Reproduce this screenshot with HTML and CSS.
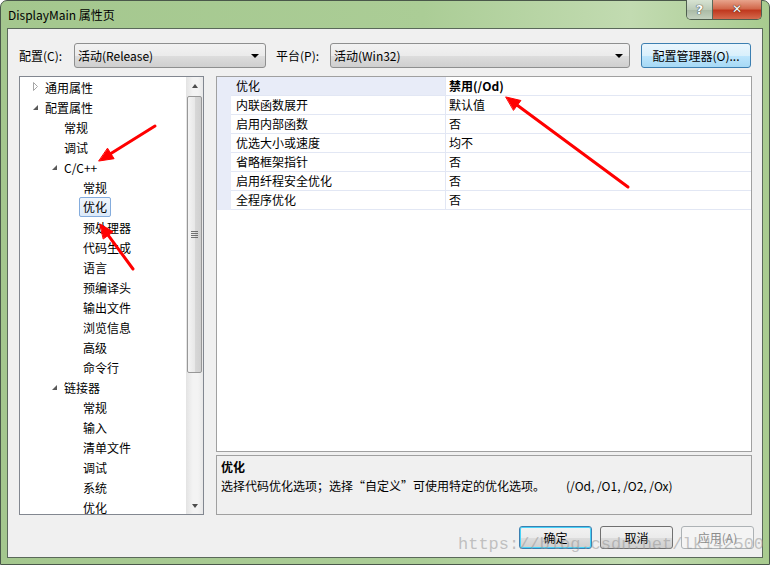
FILE: index.html
```html
<!DOCTYPE html>
<html lang="zh-CN">
<head>
<meta charset="utf-8">
<title>DisplayMain 属性页</title>
<link rel="stylesheet" href="styles.css">
</head>
<body>
<div class="window">
  <div class="titlebar">
    <span class="title">DisplayMain 属性页</span>
    <div class="captions">
      <div class="cap cap-help">?</div>
      <div class="cap cap-close">✕</div>
    </div>
  </div>
  <div class="client">
    <div class="toprow">
      <span class="lbl lbl1">配置(C):</span>
      <div class="combo combo1"><span>活动(Release)</span><i class="dd"></i></div>
      <span class="lbl lbl2">平台(P):</span>
      <div class="combo combo2"><span>活动(Win32)</span><i class="dd"></i></div>
      <div class="btn btn-mgr">配置管理器(O)...</div>
    </div>
    <div class="main">
      <div class="tree">
        <div class="tree-items">
          <div class="ti l0"><svg class="exp" width="13" height="20" viewBox="0 0 13 20"><polygon points="1.5,5.5 5.5,9.5 1.5,13.5" fill="#fff" stroke="#a6a6a6" stroke-width="1"/></svg><span>通用属性</span></div>
          <div class="ti l0"><svg class="exp" width="13" height="20" viewBox="0 0 13 20"><polygon points="1,13 6,8 6,13" fill="#595959"/></svg><span>配置属性</span></div>
          <div class="ti l1"><span class="noexp"></span><span>常规</span></div>
          <div class="ti l1"><span class="noexp"></span><span>调试</span></div>
          <div class="ti l1"><svg class="exp" width="13" height="20" viewBox="0 0 13 20"><polygon points="1,13 6,8 6,13" fill="#595959"/></svg><span>C/C++</span></div>
          <div class="ti l2"><span class="noexp"></span><span>常规</span></div>
          <div class="ti l2"><span class="noexp"></span><span class="sel">优化</span></div>
          <div class="ti l2"><span class="noexp"></span><span>预处理器</span></div>
          <div class="ti l2"><span class="noexp"></span><span>代码生成</span></div>
          <div class="ti l2"><span class="noexp"></span><span>语言</span></div>
          <div class="ti l2"><span class="noexp"></span><span>预编译头</span></div>
          <div class="ti l2"><span class="noexp"></span><span>输出文件</span></div>
          <div class="ti l2"><span class="noexp"></span><span>浏览信息</span></div>
          <div class="ti l2"><span class="noexp"></span><span>高级</span></div>
          <div class="ti l2"><span class="noexp"></span><span>命令行</span></div>
          <div class="ti l1"><svg class="exp" width="13" height="20" viewBox="0 0 13 20"><polygon points="1,13 6,8 6,13" fill="#595959"/></svg><span>链接器</span></div>
          <div class="ti l2"><span class="noexp"></span><span>常规</span></div>
          <div class="ti l2"><span class="noexp"></span><span>输入</span></div>
          <div class="ti l2"><span class="noexp"></span><span>清单文件</span></div>
          <div class="ti l2"><span class="noexp"></span><span>调试</span></div>
          <div class="ti l2"><span class="noexp"></span><span>系统</span></div>
          <div class="ti l2"><span class="noexp"></span><span>优化</span></div>
        </div>
        <div class="vscroll">
          <div class="sb-arrow"><i class="tri-up"></i></div>
          <div class="sb-track">
            <div class="sb-thumb"><span class="grip"></span></div>
          </div>
          <div class="sb-arrow"><i class="tri-down"></i></div>
        </div>
      </div>
      <div class="right">
        <div class="grid">
          <div class="row sel-row"><div class="gut"></div><div class="name">优化</div><div class="val bold">禁用(/Od)</div></div>
          <div class="row"><div class="gut"></div><div class="name">内联函数展开</div><div class="val">默认值</div></div>
          <div class="row"><div class="gut"></div><div class="name">启用内部函数</div><div class="val">否</div></div>
          <div class="row"><div class="gut"></div><div class="name">优选大小或速度</div><div class="val">均不</div></div>
          <div class="row"><div class="gut"></div><div class="name">省略框架指针</div><div class="val">否</div></div>
          <div class="row"><div class="gut"></div><div class="name">启用纤程安全优化</div><div class="val">否</div></div>
          <div class="row"><div class="gut"></div><div class="name">全程序优化</div><div class="val">否</div></div>
        </div>
        <div class="desc">
          <div class="desc-title">优化</div>
          <div class="desc-line"><span class="desc-main">选择代码优化选项；选择“自定义”可使用特定的优化选项。</span><span>(/Od, /O1, /O2, /Ox)</span></div>
        </div>
      </div>
    </div>
    <div class="buttons">
      <div class="btn btn-dlg btn-default">确定</div>
      <div class="btn btn-dlg">取消</div>
      <div class="btn btn-dlg btn-disabled">应用(A)</div>
    </div>
  </div>
  <div class="watermark">https://blog.csdn.net/lk142500</div>
  <svg class="annot" width="770" height="565" viewBox="0 0 770 565">
    <g stroke="#ff0000" stroke-width="3" stroke-linecap="round" fill="#ff0000">
      <line x1="155" y1="126" x2="110.9" y2="153.6"/>
      <polygon stroke-width="1" points="99,161 114.1,158.7 107.7,148.5"/>
      <line x1="133" y1="269" x2="108.3" y2="235.3"/>
      <polygon stroke-width="1" points="100,224 113.1,231.8 103.5,238.8"/>
      <line x1="628" y1="187" x2="517.3" y2="105.3"/>
      <polygon stroke-width="1" points="506,97 520.9,100.5 513.7,110.1"/>
    </g>
  </svg>
</div>
</body>
</html>
```
FILE: styles.css
```css
html, body { margin: 0; padding: 0; }
body {
  width: 770px; height: 565px; overflow: hidden; background: #ffffff;
  font-family: "Noto Sans CJK SC", "Noto Sans", sans-serif;
  font-size: 12px; color: #000;
}
.window {
  position: relative; width: 770px; height: 565px; box-sizing: border-box;
  border: 1px solid #4a584a; border-radius: 7px 7px 0 0;
  padding: 0 6px 6px 6px;
  display: flex; flex-direction: column;
  background: linear-gradient(90deg, #a4c78e 0%, #abcd96 55%, #c2dbb1 82%, #b4d29f 92%, #a8cb8f 100%);
}
.titlebar { height: 27px; display: flex; align-items: flex-start; flex-shrink: 0; }
.title { padding: 4px 0 0 1px; line-height: 20px; color: #000; }
.captions { margin-left: auto; margin-top: -1px; margin-right: 1px; display: flex; border: 1px solid #4f5e4f; border-top: none; border-radius: 0 0 5px 5px; overflow: hidden; }
.cap { height: 19px; line-height: 19px; text-align: center; color: #fff; font-weight: bold; font-family: "DejaVu Sans", sans-serif; }
.cap-help { width: 25px; font-size: 13px; background: linear-gradient(#d7e3d2, #bccbb8 50%, #a9b9a4 51%, #c3d1bf); text-shadow: 0 0 1px #333, 0 0 1px #333; border-right: 1px solid #5a6a5a; }
.cap-close { width: 48px; font-size: 12px; background: linear-gradient(#e8a48c, #d2694c 45%, #c0391f 55%, #d56a4d); text-shadow: 0 0 1px #3a1a10, 0 0 1px #3a1a10; }
.client {
  flex: 1; background: #f0f0f0; border: 1px solid #5a695a;
  padding: 14px 10px 8px 11px; display: flex; flex-direction: column; min-height: 0;
}
.toprow { height: 25px; display: flex; align-items: center; flex-shrink: 0; }
.lbl { line-height: 25px; }
.lbl1 { width: 55px; }
.lbl2 { width: 54px; margin-left: 10px; }
.combo {
  box-sizing: border-box; height: 25px; border: 1px solid #8e8f8f; border-radius: 3px;
  background: linear-gradient(#f2f2f2, #ebebeb 50%, #dddddd 51%, #cfcfcf);
  display: flex; align-items: center; padding-left: 3px; position: relative;
}
.combo1 { width: 192px; }
.combo2 { width: 300px; }
.dd { position: absolute; right: 6px; top: 10px; width: 0; height: 0; border-left: 4px solid transparent; border-right: 4px solid transparent; border-top: 4px solid #000; }
.btn {
  box-sizing: border-box; border: 1px solid #707070; border-radius: 3px; text-align: center;
  background: linear-gradient(#f2f2f2, #ebebeb 50%, #dddddd 51%, #cfcfcf);
}
.btn-mgr { width: 110px; height: 25px; line-height: 23px; margin-left: 11px; border-color: #3c7fb1; background: linear-gradient(#eaf6fd, #d9f0fc 50%, #bee6fd 51%, #a7d9f5); }
.main { flex: 1; display: flex; margin-top: 8px; min-height: 0; }
.tree { width: 185px; box-sizing: border-box; border: 1px solid #828790; background: #fff; display: flex; overflow: hidden; }
.tree-items { flex: 1; overflow: hidden; }
.ti { height: 20px; display: flex; align-items: center; white-space: nowrap; }
.ti.l0 { padding-left: 12px; }
.ti.l1 { padding-left: 31px; }
.ti.l2 { padding-left: 50px; }
.exp { display: block; flex-shrink: 0; }
.noexp { width: 13px; flex-shrink: 0; }
.sel { margin-left: -4px; padding: 0 3px; line-height: 18px; border: 1px solid #84acdd; border-radius: 2px; background: linear-gradient(#f2f7fd, #dbe9f9); }
.vscroll { width: 17px; flex-shrink: 0; display: flex; flex-direction: column; background: linear-gradient(90deg, #e3e3e3, #f3f3f3 40%, #f3f3f3 70%, #e8e8e8); }
.sb-arrow { height: 17px; display: flex; align-items: center; justify-content: center; flex-shrink: 0; }
.tri-up { width: 0; height: 0; border-left: 3.5px solid transparent; border-right: 3.5px solid transparent; border-bottom: 4px solid #4d4d4d; }
.tri-down { width: 0; height: 0; border-left: 3.5px solid transparent; border-right: 3.5px solid transparent; border-top: 4px solid #4d4d4d; }
.sb-track { flex: 1; padding-top: 2px; }
.sb-thumb {
  box-sizing: border-box; height: 277px; margin: 0 1px 0 1px; border: 1px solid #979797; border-radius: 2px;
  background: linear-gradient(90deg, #f4f4f4, #e8e8e8 50%, #d8d8d8 51%, #cfcfcf);
  display: flex; align-items: center; justify-content: center;
}
.grip { width: 7px; height: 7px; background: repeating-linear-gradient(#555 0 1px, transparent 1px 2px); opacity: 0.8; }
.right { flex: 1; margin-left: 12px; display: flex; flex-direction: column; }
.grid { height: 376px; box-sizing: border-box; border: 1px solid #a0a0a0; background: #fff; flex-shrink: 0; }
.row { height: 19px; display: flex; }
.gut { width: 14px; background: #e8ecf8; flex-shrink: 0; }
.name { width: 215px; box-sizing: border-box; padding-left: 5px; line-height: 18px; border-bottom: 1px solid #e2e7f4; border-right: 1px solid #e2e7f4; white-space: nowrap; }
.val { flex: 1; padding-left: 3px; line-height: 18px; border-bottom: 1px solid #e2e7f4; white-space: nowrap; }
.sel-row .name { background: #e8ecf8; }
.bold { font-weight: bold; }
.desc { margin-top: 3px; flex: 1; box-sizing: border-box; border: 1px solid #a0a0a0; padding: 1px 0 0 4px; }
.desc-title { font-weight: bold; line-height: 19px; }
.desc-line { line-height: 19px; white-space: nowrap; }
.desc-main { display: inline-block; width: 345px; }
.buttons { display: flex; justify-content: flex-end; gap: 8px; margin-top: 11px; margin-right: -2px; flex-shrink: 0; }
.btn-dlg { width: 73px; height: 23px; line-height: 21px; }
.btn-default { border-color: #3c7fb1; box-shadow: inset 0 0 0 1px #48d2f7; }
.btn-disabled { border-color: #adb2b5; background: #f4f4f4; color: #8c8c8c; }
.watermark {
  position: absolute; left: 457px; top: 532px; font-family: "Liberation Mono", monospace;
  font-size: 17px; line-height: 24px; color: rgba(150, 150, 150, 0.55); white-space: nowrap; pointer-events: none;
}
.annot { position: absolute; left: -1px; top: -1px; pointer-events: none; }
```
